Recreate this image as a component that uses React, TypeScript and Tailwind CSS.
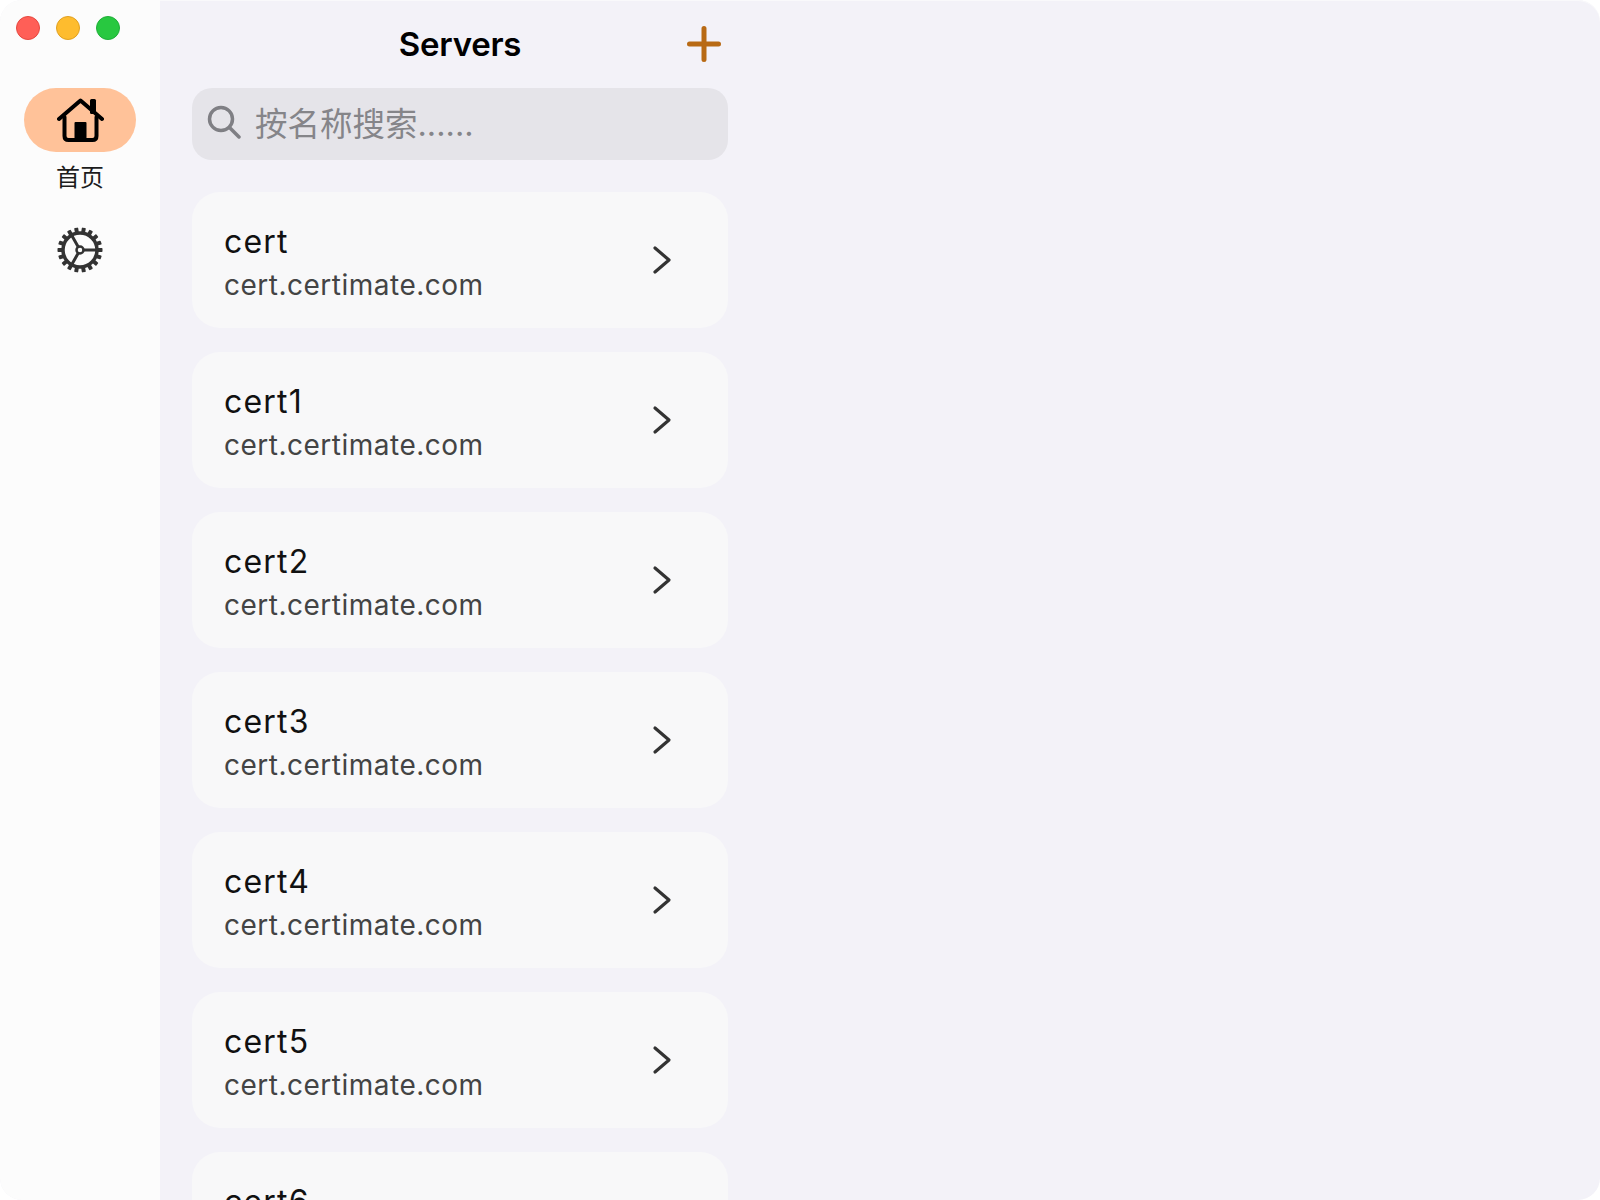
const FONT = "font-['Inter','Noto_Sans_CJK_SC',sans-serif]";

const servers = ["cert", "cert1", "cert2", "cert3", "cert4", "cert5", "cert6"];

function HomeIcon() {
  return (
    <svg width="47" height="44" viewBox="0 0 47 44" fill="none" stroke="#000" strokeWidth="4" strokeLinecap="round" strokeLinejoin="round">
      <path d="M2 21 L23.5 2.5 L45 21" />
      <path d="M7.5 19 V38 Q7.5 42 11.5 42 H35.5 Q39.5 42 39.5 38 V19" />
      <rect x="33" y="1" width="6" height="15" rx="1.5" fill="#000" stroke="none" />
      <rect x="17.5" y="24" width="12" height="18" rx="1" fill="#000" stroke="none" />
    </svg>
  );
}

function GearIcon() {
  const teeth = Array.from({ length: 18 }, (_, i) => i * 20);
  return (
    <svg width="48" height="48" viewBox="0 0 48 48" fill="none" stroke="#333" strokeLinecap="round">
      {teeth.map((a) => (
        <rect key={a} x="22" y="1.5" width="4" height="5" rx="0.8" fill="#333" stroke="none" transform={`rotate(${a + 10} 24 24)`} />
      ))}
      <circle cx="24" cy="24" r="17" strokeWidth="3.5" />
      <circle cx="24" cy="24" r="3.5" strokeWidth="2.5" />
      <path d="M28 24 H41 M22 27.5 L15.5 39 M22 20.5 L15.5 9" strokeWidth="3" />
    </svg>
  );
}

function SearchIcon() {
  return (
    <svg className="mb-1" width="34" height="34" viewBox="0 0 34 34" fill="none" stroke="#7f7f84" strokeWidth="3.5" strokeLinecap="round">
      <circle cx="14" cy="14" r="11.5" />
      <path d="M22.5 22.5 L32 32" />
    </svg>
  );
}

function ServerCard({ name }: { name: string }) {
  return (
    <div className="flex h-[136px] shrink-0 items-center justify-between rounded-[28px] bg-[#f8f8f9] pl-8 pr-[56px]">
      <div className="flex flex-col pt-[8px]">
        <span className="text-[32px] leading-[42px] tracking-[1.2px] text-[#111]">{name}</span>
        <span className="text-[28px] leading-[44px] tracking-[0.5px] text-[#444]">cert.certimate.com</span>
      </div>
      <svg width="20" height="30" viewBox="0 0 20 30" fill="none" stroke="#333" strokeWidth="3.2" strokeLinecap="round" strokeLinejoin="round">
        <path d="M3 3 L17 15 L3 27" />
      </svg>
    </div>
  );
}

export default function App() {
  return (
    <div className={`${FONT} h-[1200px] w-[1600px] overflow-hidden bg-white`}>
      <div className="relative flex h-full overflow-hidden rounded-[22px] bg-[#f3f2f8] shadow-[inset_0_1px_0_#f9f9fb]">
        <div className="absolute left-4 top-4 flex gap-4">
          <span className="h-6 w-6 rounded-full border border-[#e5483f] bg-[#ff5f57]" />
          <span className="h-6 w-6 rounded-full border border-[#e0a020] bg-[#febc2e]" />
          <span className="h-6 w-6 rounded-full border border-[#1fae38] bg-[#28c840]" />
        </div>

        <aside className="flex w-[160px] shrink-0 flex-col items-center bg-[#fcfcfc] pt-[88px]">
          <div className="flex h-16 w-28 items-center justify-center rounded-full bg-[#ffc299]">
            <HomeIcon />
          </div>
          <span className="mt-2 text-[24px] leading-[36px] text-[#1c1c1c]">首页</span>
          <div className="mt-[30px]">
            <GearIcon />
          </div>
        </aside>

        <main className="flex w-[600px] flex-col px-8">
          <header className="relative flex h-[88px] shrink-0 items-center justify-center pt-[2px]">
            <h1 className="text-[33px] font-semibold tracking-[-0.25px] text-black">Servers</h1>
            <svg className="absolute right-[7px] top-[26px]" width="36" height="36" viewBox="0 0 36 36" stroke="#b86a14" strokeWidth="5" strokeLinecap="round">
              <path d="M19 2.5 V33.5 M4.5 18 H33.5" />
            </svg>
          </header>

          <div className="flex h-[72px] shrink-0 items-center gap-[14px] rounded-[20px] bg-[#e5e4e9] pl-[15px]">
            <SearchIcon />
            <input
              className="mt-[3px] min-w-0 flex-1 bg-transparent text-[32.5px] outline-none placeholder:text-[#858589]"
              placeholder="按名称搜索......"
            />
          </div>

          <div className="mt-8 flex flex-col gap-6">
            {servers.map((s) => (
              <ServerCard key={s} name={s} />
            ))}
          </div>
        </main>

        <div className="flex-1" />
      </div>
    </div>
  );
}
